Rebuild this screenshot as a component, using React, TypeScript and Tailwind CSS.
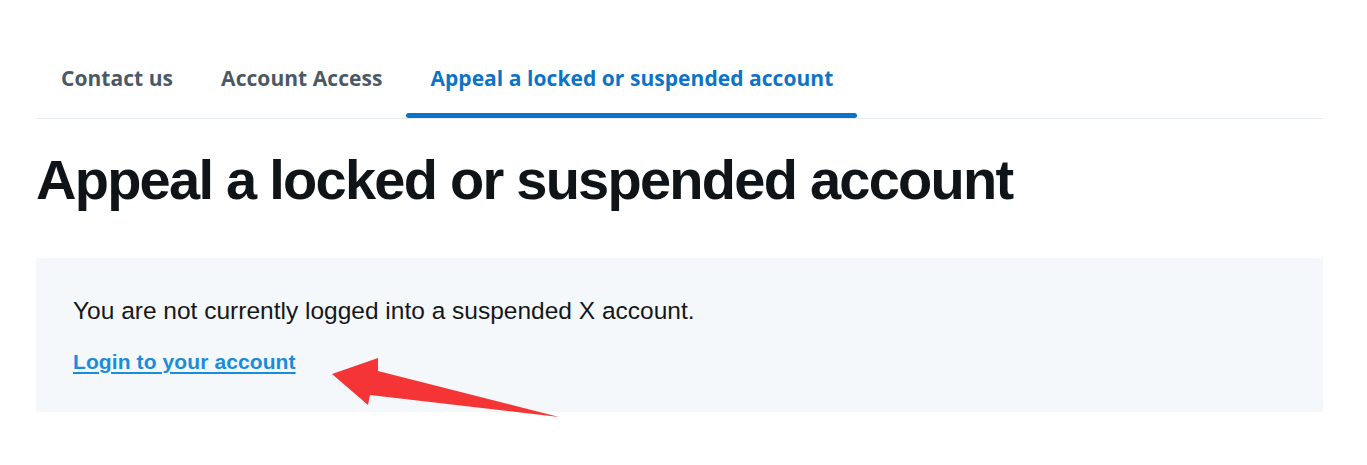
const tabs = [
  { label: "Contact us", active: false },
  { label: "Account Access", active: false },
  { label: "Appeal a locked or suspended account", active: true },
];

export default function App() {
  return (
    <div className="w-[1367px] h-[465px] bg-white relative overflow-hidden">
      <div className="ml-[36px] mr-[44px] pt-[56px]">
        {/* Tabs */}
        <div className="flex pl-[1px] border-b border-[#e6ecf0]">
          {tabs.map((t) => (
            <div
              key={t.label}
              className={`relative px-[24px] pt-[8px] pb-[26px] text-[21px] font-bold font-['Open_Sans',sans-serif] leading-[28px] tracking-[0.05px] ${
                t.active ? "text-[#0b74c9]" : "text-[#4b5966]"
              }`}
            >
              {t.label}
              {t.active && (
                <span className="absolute left-0 right-0 bottom-0 h-[5px] rounded-full bg-[#0b74c9]" />
              )}
            </div>
          ))}
        </div>

        {/* Heading */}
        <h1 className="mt-[29px] text-[56px] leading-[64px] font-bold text-[#0f1419] font-['Liberation_Sans',Arial,sans-serif] tracking-[-1.75px]">
          Appeal a locked or suspended account
        </h1>

        {/* Notice box */}
        <div className="mt-[46px] h-[154px] bg-[#f5f8fa] px-[37px] pt-[39px]">
          <p className="text-[24.5px] leading-[28px] text-[#14171a] font-['Liberation_Sans',Arial,sans-serif]">
            You are not currently logged into a suspended X account.
          </p>
          <a
            href="#"
            className="inline-block mt-[23px] text-[21px] leading-[28px] font-bold text-[#1a8cdc] underline underline-offset-[3px] font-['Liberation_Sans',Arial,sans-serif] tracking-[0.1px]"
          >
            Login to your account
          </a>
        </div>
      </div>

      {/* Annotation arrow */}
      <svg
        className="absolute left-0 top-0 pointer-events-none"
        width="1367"
        height="465"
        viewBox="0 0 1367 465"
      >
        <polygon
          points="332,374 378,358 378,371 559,417 370,395 368,405"
          fill="#f53535"
        />
      </svg>
    </div>
  );
}
